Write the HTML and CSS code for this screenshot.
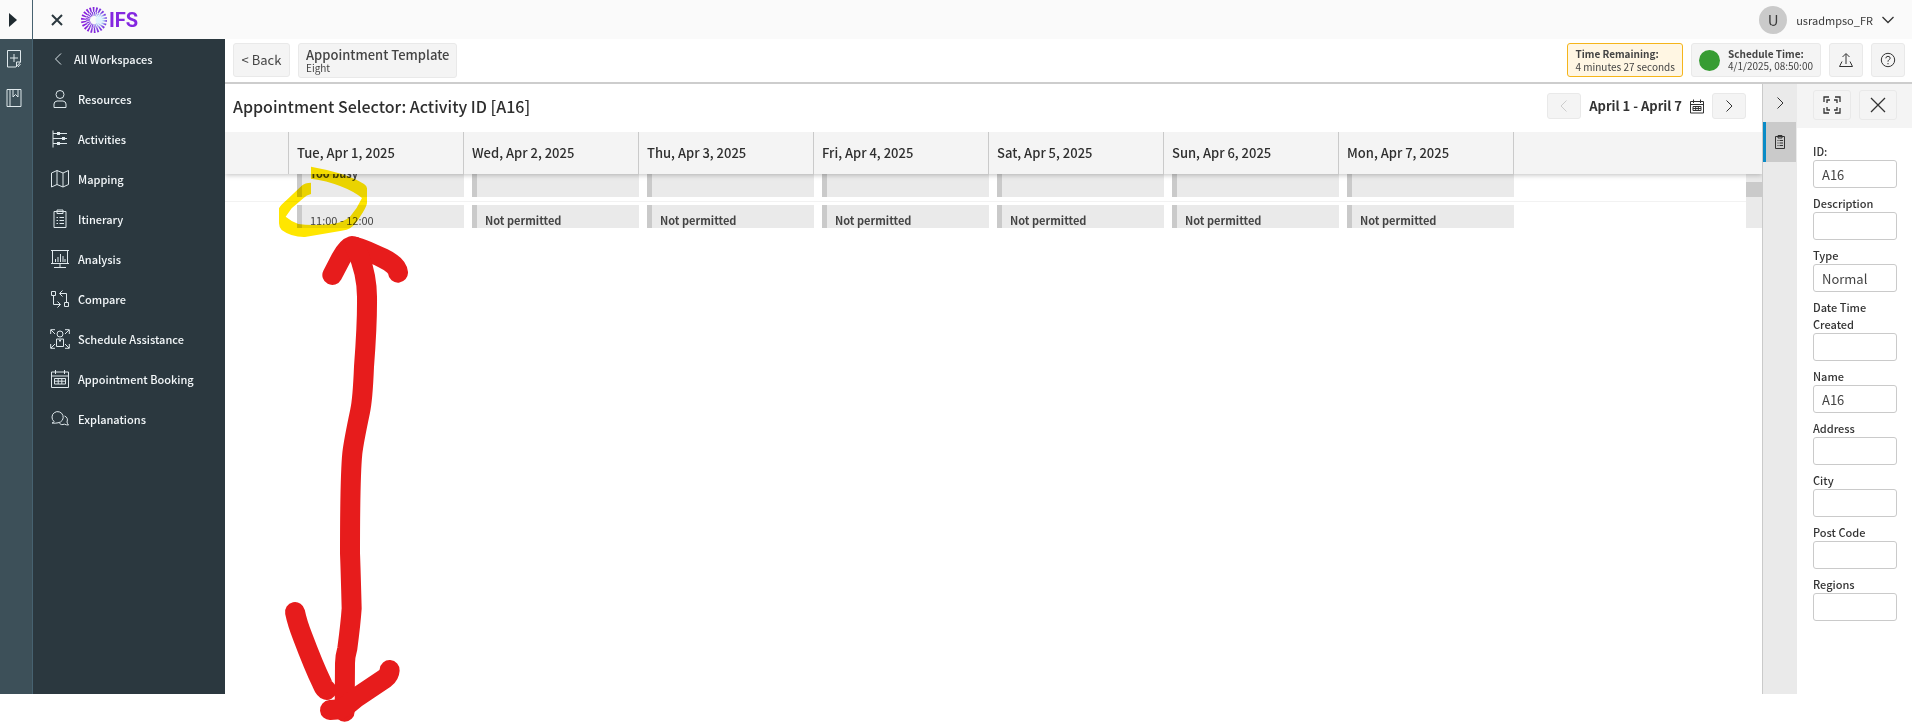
FILE: index.html
```html
<!DOCTYPE html>
<html lang="en">
<head>
<meta charset="utf-8">
<title>Appointment Selector</title>
<link rel="stylesheet" href="styles.css">
</head>
<body>
<div class="app">
  <header class="topbar">
    <button class="rail-toggle" aria-label="Expand"><svg width="8" height="14" viewBox="0 0 8 14"><path d="M0 0L8 7L0 14Z" fill="#1f2a30"/></svg></button>
    <button class="close-menu" aria-label="Close menu"><svg width="12" height="12" viewBox="0 0 12 12"><path d="M1 1L11 11M11 1L1 11" stroke="#2b383f" stroke-width="2" fill="none"/></svg></button>
    <a class="logo" href="#">
      <svg width="26" height="26" viewBox="0 0 26 26">
        <defs><radialGradient id="burst" gradientUnits="userSpaceOnUse" cx="18" cy="13" r="16"><stop offset="0" stop-color="#e8fbff"/><stop offset=".3" stop-color="#a9c8f5"/><stop offset=".5" stop-color="#7a3fe0"/><stop offset="1" stop-color="#8a1fdc"/></radialGradient></defs>
        <circle cx="13" cy="13" r="10.500" fill="none" stroke="url(#burst)" stroke-width="5" stroke-dasharray="1.600 1.399"/>
        <circle cx="13" cy="13" r="6" fill="none" stroke="url(#burst)" stroke-width="4" stroke-dasharray="1 .7136"/>
        <circle cx="18" cy="13" r="3.500" fill="#dff4ff"/>
      </svg>
      <span>IFS</span>
    </a>
    <button class="user"><span class="avatar">U</span><span>usradmpso_FR</span><svg width="12" height="8" viewBox="0 0 12 8"><path d="M.5 1L6 6.500L11.500 1" stroke="#333" stroke-width="1.300" fill="none"/></svg></button>
  </header>
  <div class="shell">
    <div class="rail">
      <button aria-label="New note"><svg width="16" height="20" viewBox="0 0 16 20"><path d="M1.500 1.500H14.500V13L10 18H1.500ZM14.500 13H10.500V18M4 9H12M8 5V13M14.500 15L12 18" /></svg></button>
      <button aria-label="Bookmarks"><svg width="16" height="20" viewBox="0 0 16 20"><path d="M1 1.500H15V18.500H1ZM4 1.500V18.500M7 2V9L9.500 6.500L12 9V2"/></svg></button>
    </div>
    <nav class="menu">
      <a class="menu-back" href="#"><svg width="20" height="20" viewBox="0 0 20 20"><path d="M11 4.500L5.500 10L11 15.500"/></svg>All Workspaces</a>
      <a href="#"><svg width="20" height="20" viewBox="0 0 20 20"><circle cx="10" cy="5.500" r="4"/><path d="M4 18.500V15Q4 12.500 7 12H13Q16 12.500 16 15V18.500Z"/></svg>Resources</a>
      <a href="#"><svg width="20" height="20" viewBox="0 0 20 20"><path d="M3 1.500V18.500M3 4.500H17M3 9.500H17M3 14.500H17"/><path d="M7 3h3v3H7zM12 8h3v3h-3zM7 13h3v3H7z" fill="#dfe8ec" stroke="none"/></svg>Activities</a>
      <a href="#"><svg width="20" height="20" viewBox="0 0 20 20"><path d="M1.500 4L7 1.500L13 4L18.500 1.500V15.500L13 18L7 15.500L1.500 18ZM7 1.500V15.500M13 4V18"/></svg>Mapping</a>
      <a href="#"><svg width="20" height="20" viewBox="0 0 20 20"><path d="M4 2.500H16V18.500H4ZM7 2.500V4.500H13V1H7ZM6.500 8.500H8M9.500 8.500H14M6.500 11.500H8M9.500 11.500H14M6.500 14.500H8M9.500 14.500H14"/></svg>Itinerary</a>
      <a href="#"><svg width="20" height="20" viewBox="0 0 20 20"><path d="M1 1.500H19M2.500 2V14M17.500 2V14M1 14.500H19M10 15V18M4 18.500H16M5.500 13V10M8 13V8M10.500 13V5M13 13V7M15 13V10"/></svg>Analysis</a>
      <a href="#"><svg width="20" height="20" viewBox="0 0 20 20"><path d="M1.500 2.500H5.500V6.500H1.500ZM14.500 13.500H18.500V17.500H14.500ZM3.500 6.500V15.500H10M7.500 12.500L10.500 15.500L7.500 18.500M16.500 13.500V4.500H10M12.500 1.500L9.500 4.500L12.500 7.500"/></svg>Compare</a>
      <a href="#"><svg width="20" height="20" viewBox="0 0 20 20"><circle cx="10" cy="5" r="3"/><path d="M6.500 17.500V10H13.500V17.500ZM9 10.500L10 12.500L11 10.500M.7 5V.7H5M1 1L5 5M15 .7H19.300V5M19 1L15 5M.7 15V19.300H5M1 19L5 15M19.300 15V19.300H15M19 19L15 15"/></svg>Schedule Assistance</a>
      <a href="#"><svg width="20" height="20" viewBox="0 0 20 20"><path d="M1.500 3H18.500V18.500H1.500ZM1.500 7H18.500M5.500 1V5M14.500 1V5M4.500 9.500H15.500V15H4.500ZM4.500 12.200H15.500M8.200 9.500V15M11.800 9.500V15"/></svg>Appointment Booking</a>
      <a href="#"><svg width="20" height="20" viewBox="0 0 20 20"><path d="M4 12.500A5.600 5.600 0 1 1 8 13.800Q5.500 14.500 2 14Q4 13.500 4 12.500ZM14.500 7Q18.500 8.500 17 13Q17.500 15 18.500 16Q16 16 14.500 15.200Q11.500 16.500 9.500 14.500"/></svg>Explanations</a>
    </nav>
    <div class="work">
      <div class="toolbar">
        <button class="btn back">&lt; Back</button>
        <button class="btn template"><strong>Appointment Template</strong><small>Eight</small></button>
        <div class="btn remaining"><strong>Time Remaining:</strong><span>4 minutes 27 seconds</span></div>
        <div class="btn schedule"><i class="dot"></i><div><strong>Schedule Time:</strong><span>4/1/2025, 08:50:00</span></div></div>
        <button class="btn square" aria-label="Export"><svg width="16" height="16" viewBox="0 0 16 16"><path d="M4 9.500L1.500 14.500H14.500L12 9.500M8 12V2M4.500 5L8 1.500L11.500 5"/></svg></button>
        <button class="btn square" aria-label="Help"><svg width="16" height="16" viewBox="0 0 16 16"><circle cx="8" cy="8" r="6.700"/><path d="M5.800 6.300Q6 4.300 8 4.300Q10.200 4.400 10.200 6.200Q10 7.300 8.700 8Q8 8.500 8 9.700M8 11V12.300"/></svg></button>
      </div>
      <div class="content">
        <main class="selector">
          <div class="title-row">
            <h1>Appointment Selector: Activity ID [A16]</h1>
            <button class="btn step" aria-label="Previous week" disabled><svg width="12" height="14" viewBox="0 0 12 14"><path d="M8.500 1.500L3 7L8.500 12.500"/></svg></button>
            <span class="range">April 1 - April 7</span>
            <button class="pick" aria-label="Pick date"><svg width="14" height="15" viewBox="0 0 14 15"><path d="M.5 2.500H13.500V14H.5ZM.5 5.500H13.500M3.500 .5V4M10.500 .5V4M3 7.500H11V11.500H3ZM3 9.500H11M5.700 7.500V11.500M8.300 7.500V11.500"/></svg></button>
            <button class="btn step" aria-label="Next week"><svg width="12" height="14" viewBox="0 0 12 14"><path d="M3.500 1.500L9 7L3.500 12.500"/></svg></button>
          </div>
          <table class="days">
            <thead><tr><th class="gutter"></th><th>Tue, Apr 1, 2025</th><th>Wed, Apr 2, 2025</th><th>Thu, Apr 3, 2025</th><th>Fri, Apr 4, 2025</th><th>Sat, Apr 5, 2025</th><th>Sun, Apr 6, 2025</th><th>Mon, Apr 7, 2025</th><th class="rest"></th></tr></thead>
          </table>
          <div class="viewport">
            <div class="scroller" id="slots">
              <table class="slots">
                <tbody>
                  <tr><td class="gutter"></td><td><div class="slot busy"><strong>Too busy</strong></div></td><td><div class="slot"></div></td><td><div class="slot"></div></td><td><div class="slot"></div></td><td><div class="slot"></div></td><td><div class="slot"></div></td><td><div class="slot"></div></td><td class="rest"></td></tr>
                  <tr><td class="gutter"></td><td><div class="slot">11:00 - 12:00</div></td><td><div class="slot"><strong>Not permitted</strong></div></td><td><div class="slot"><strong>Not permitted</strong></div></td><td><div class="slot"><strong>Not permitted</strong></div></td><td><div class="slot"><strong>Not permitted</strong></div></td><td><div class="slot"><strong>Not permitted</strong></div></td><td><div class="slot"><strong>Not permitted</strong></div></td><td class="rest"></td></tr>
                </tbody>
              </table>
            </div>
            <div class="track"><div class="thumb"></div></div>
          </div>
        </main>
        <div class="tabs">
          <button aria-label="Collapse"><svg width="10" height="14" viewBox="0 0 10 14"><path d="M2.500 1.500L8 7L2.500 12.500"/></svg></button>
          <button class="active" aria-label="Details"><svg width="12" height="16" viewBox="0 0 12 16"><path d="M1.500 2.500H10.500V14.500H1.500ZM4 2.500V4H8V1.500H4ZM3.500 6.500H4.500M5.500 6.500H9M3.500 9H4.500M5.500 9H9M3.500 11.500H4.500M5.500 11.500H9"/></svg></button>
        </div>
        <aside class="details">
          <div class="details-head">
            <button class="btn" aria-label="Full screen"><svg width="18" height="18" viewBox="0 0 18 18"><path d="M1 6V1H6M4 7V4H7M12 1H17V6M11 4H14V7M1 12V17H6M4 11V14H7M17 12V17H12M14 11V14H11" stroke-width="1.300"/></svg></button>
            <button class="btn" aria-label="Close details"><svg width="16" height="16" viewBox="0 0 16 16"><path d="M1 1L15 15M15 1L1 15" stroke-width="1.300"/></svg></button>
          </div>
          <form class="fields">
            <label>ID:<input value="A16"></label>
            <label>Description<input></label>
            <label>Type<input value="Normal"></label>
            <label>Date Time Created<input></label>
            <label>Name<input value="A16"></label>
            <label>Address<input></label>
            <label>City<input></label>
            <label>Post Code<input></label>
            <label>Regions<input></label>
          </form>
        </aside>
      </div>
    </div>
  </div>
</div>
<svg class="markup" width="200" height="563" viewBox="0 -180 600 1689">
  <path class="marker" d="M153 -160Q200 -152 245 -138Q285 -125 312 -108Q321 -102 321 -95V-50Q318 -35 300 -10Q285 15 270 25Q262 30 245 32L135 51Q95 52 65 30Q57 22 57 10V-35Q62 -45 80 -60L125 -103Q135 -112 153 -112V-78Q140 -75 130 -65L95 -35L77 -10Q95 5 115 12Q150 18 210 13Q250 8 270 -10Q292 -35 306 -66Q280 -87 240 -102Q200 -118 153 -124Z"/>
  <g class="pen">
    <path d="M217 165L243 115Q260 83 276 78Q300 82 370 115Q412 135 414 158"/>
    <path d="M285 80Q320 150 321 230Q322 310 312 440Q308 540 300 575Q280 670 277 700Q270 770 270 1000Q272 1050 275 1165Q272 1210 262 1285Q255 1310 255 1330L254 1475"/>
    <path d="M105 1176Q112 1210 128 1250Q160 1335 186 1390Q193 1408 200 1410M210 1470L240 1468Q265 1455 290 1432L375 1375Q388 1365 389 1350"/>
  </g>
</svg>
<script src="script.js"></script>
</body>
</html>
```
FILE: script.js
```js
// Open the slot list at the late-morning row.
document.getElementById('slots').scrollTop = 39;
```
FILE: styles.css
```css
* { box-sizing: border-box; }
body { margin: 0; background: #fff; color: #3b3b3b; font: 13px/18px "Noto Sans CJK SC", "Noto Sans", sans-serif; overflow: hidden; }
button, input { font: inherit; color: inherit; margin: 0; }
button { padding: 0; border: 0; background: none; display: flex; align-items: center; justify-content: center; }
a { color: inherit; text-decoration: none; }
svg { flex: none; fill: none; stroke-width: 1; }
strong { font-weight: 500; }

.app { display: flex; flex-direction: column; height: calc(100vh - 29px); }
.topbar { display: flex; flex: none; align-items: center; height: 39px; background: #fafafa; }
.rail-toggle { width: 33px; height: 39px; padding-right: 7px; border-right: 1px solid #476270; }
.close-menu { width: 48px; height: 39px; }
.logo { display: flex; align-items: center; gap: 2px; color: #8427e0; font: 700 20px/26px Roboto, sans-serif; }
.user { gap: 9px; margin-left: auto; padding-right: 18px; font-size: 11px; }
.avatar { width: 28px; height: 28px; border-radius: 50%; background: #cacaca; font-size: 15px; line-height: 28px; }

.shell { display: flex; flex: 1; min-height: 0; }
.rail { display: flex; flex-direction: column; width: 33px; background: #3d5059; border-right: 1px solid #476270; }
.rail button { width: 27px; height: 39px; }
.rail svg { stroke: #dfe8ec; }
.menu { width: 192px; background: #2b383f; color: #f4f8fa; font-weight: 500; font-size: 11px; }
.menu a { display: flex; align-items: center; gap: 8px; height: 40px; padding-left: 17px; }
.menu .menu-back { gap: 4px; }
.menu svg { stroke: #dfe8ec; }

.work { display: flex; flex: 1; flex-direction: column; min-width: 0; }
.toolbar { display: flex; align-items: flex-start; gap: 8px; height: 45px; padding: 4px 7px 0 8px; border-bottom: 2px solid #cdcdcd; }
.btn { border: 1px solid #e9e9e9; border-radius: 3px; background: #f4f4f4; color: #444; }
.btn svg, .pick svg, .tabs svg { stroke: #333; }
.back { width: 57px; height: 34px; font-size: 13px; }
.template { flex-direction: column; align-items: flex-start; height: 35px; margin-right: auto; padding: 0 7px; }
.template strong { line-height: 14px; }
.template small { font-size: 10px; line-height: 12px; }
.remaining, .schedule { height: 34px; padding: 3px 7px; font-size: 10px; line-height: 13px; }
.remaining { border-color: #f5b51b; background: #fff6e3; }
.remaining span, .remaining strong, .schedule span, .schedule strong { display: block; }
.remaining strong, .schedule strong { font-weight: 700; }
.schedule { display: flex; align-items: center; gap: 8px; line-height: 12px; }
.dot { width: 21px; height: 21px; border-radius: 50%; background: #379c33; }
.square { width: 34px; height: 34px; }

.content { display: flex; flex: 1; min-height: 0; }
.selector { flex: 1; min-width: 0; }
.title-row { display: flex; align-items: center; gap: 8px; height: 48px; padding: 0 16px 4px 8px; }
h1 { margin: 0 auto 0 0; color: #2e2e2e; font-size: 16px; line-height: 24px; font-weight: 500; }
.step { width: 34px; height: 26px; }
.step:disabled svg { stroke: #ccc; }
.range { color: #333; font-weight: 700; }
table { width: 100%; table-layout: fixed; border-collapse: separate; border-spacing: 0; }
th, td { width: 175px; padding: 0; text-align: left; }
.gutter { width: 64px; }
th.rest, td.rest { width: auto; }
.days { position: relative; z-index: 1; background: #f4f4f4; box-shadow: 0 1px 5px rgba(0, 0, 0, .25); clip-path: inset(0 0 -8px 0); }
.days th { height: 42px; padding-left: 8px; border-right: 1px solid #cacaca; color: #2e2e2e; font-weight: 500; }
.days .rest { border-right: 0; }
.viewport { display: flex; height: 54px; }
.scroller { flex: 1; overflow: hidden; }
.slots td { padding: 3px 0 4px 8px; border-bottom: 1px solid #f2f2f2; }
.slot { height: 59px; padding: 6px 8px; border-left: 5px solid #cacaca; background: #eaeaea; color: #444; font-size: 11px; }
.slot strong { font-weight: 700; }
.busy { padding-top: 26px; }
.track { width: 16px; padding-top: 8px; background: #eaeaea; }
.thumb { height: 15px; background: #cacaca; }

.tabs { width: 35px; border-left: 1px solid #cacaca; background: #eaeaea; }
.tabs button { width: 33px; height: 38px; }
.tabs .active { height: 40px; padding-right: 3px; border-left: 3px solid #0a8bc6; background: #cacaca; }
.details { width: 115px; }
.details-head { display: flex; gap: 8px; height: 44px; padding: 6px 15px 8px 16px; background: #f4f4f4; }
.details-head .btn { flex: 1; }
.fields { display: flex; flex-direction: column; gap: 7px; padding: 15px 15px 0 16px; }
.fields label { color: #333; font-size: 11px; line-height: 17px; font-weight: 500; }
.fields input { display: block; width: 100%; height: 28px; padding: 0 8px; border: 1px solid #cacaca; border-radius: 3px; background: #fff; color: #444; font-size: 13px; font-weight: 400; }

.markup { position: absolute; left: 260px; top: 160px; z-index: 2; pointer-events: none; mix-blend-mode: multiply; }
.marker { fill: #ffe600; }
.pen { stroke: #e71c1c; stroke-width: 60; stroke-linecap: round; stroke-linejoin: round; }
```
